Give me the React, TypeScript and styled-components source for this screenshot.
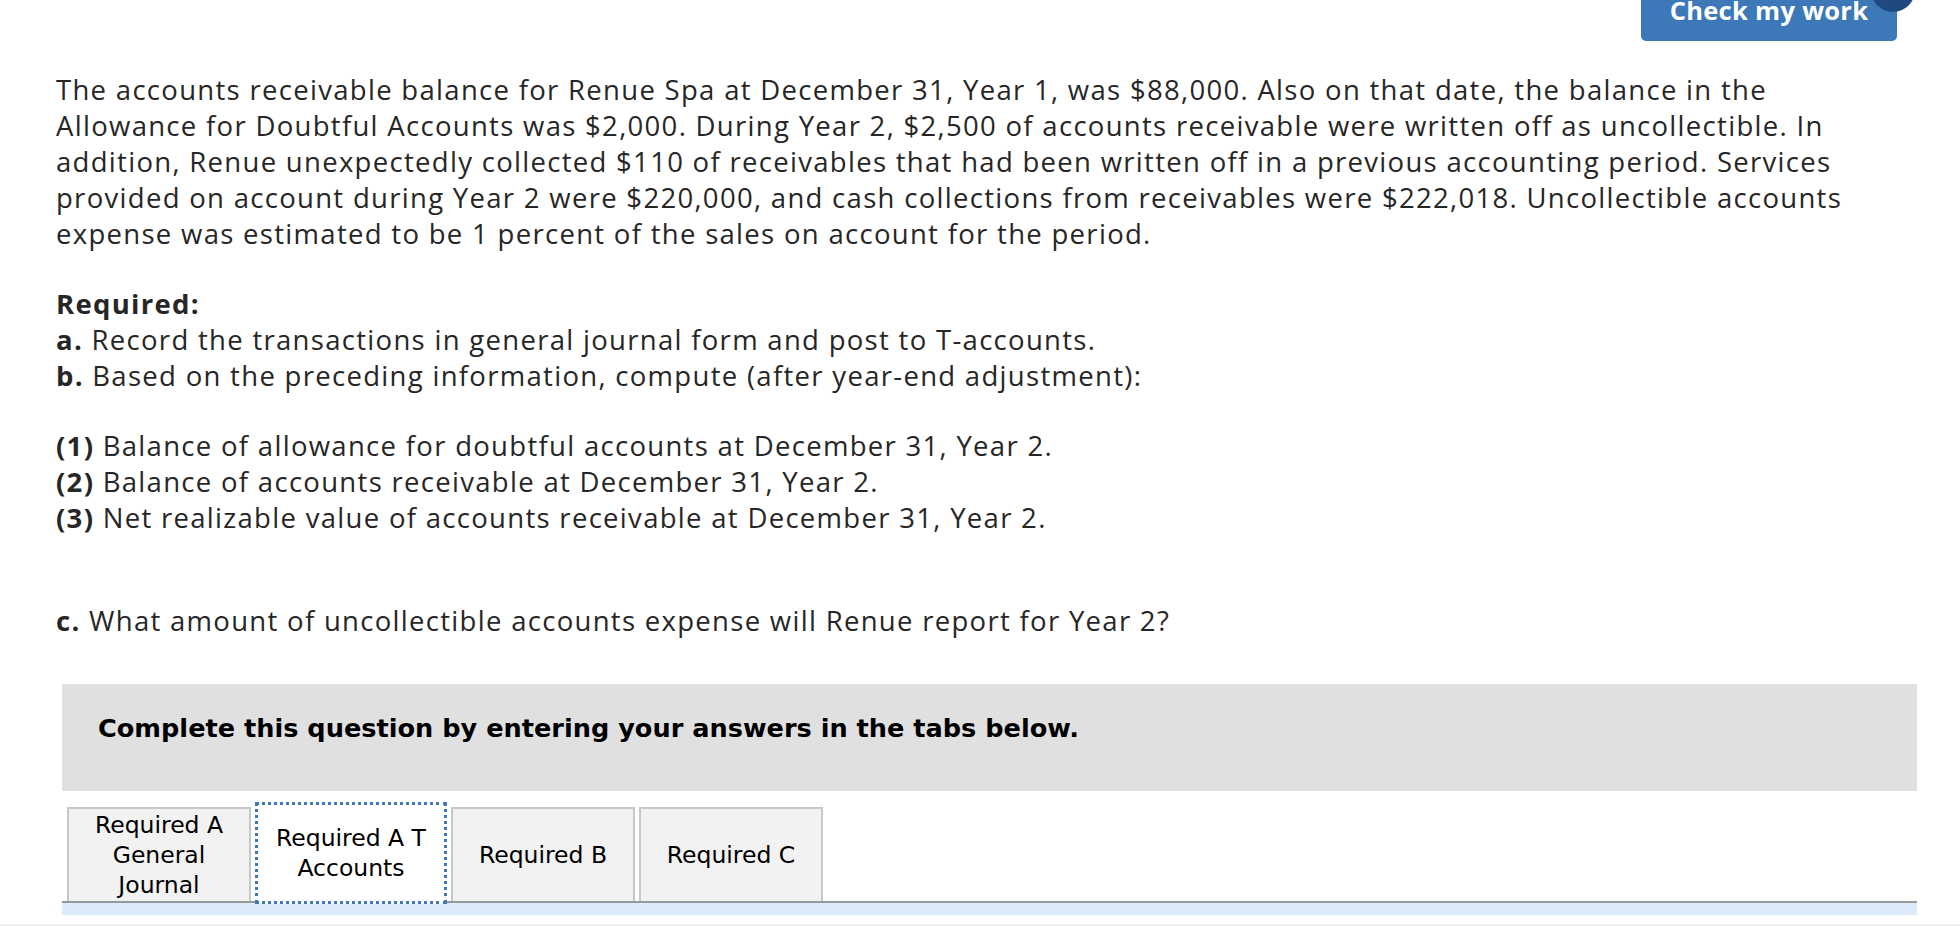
import React from "react";
import styled, { createGlobalStyle } from "styled-components";

const Global = createGlobalStyle`
  html, body { margin: 0; padding: 0; background: #ffffff; }
  body { width: 1960px; height: 926px; overflow: hidden; }
`;

const Page = styled.div`
  width: 1960px;
  height: 926px;
  display: flex;
  flex-direction: column;
  font-family: "Open Sans", "Liberation Sans", sans-serif;
  color: #262626;
  position: relative;
`;

const TopBar = styled.div`
  display: flex;
  justify-content: flex-end;
  padding-right: 63px;
  height: 41px;
  overflow: visible;
`;

const CheckButton = styled.button`
  position: relative;
  margin-top: -12px;
  width: 256px;
  height: 53px;
  border: none;
  border-radius: 5px;
  background: #3d79b8;
  color: #ffffff;
  font-family: "Open Sans", "Liberation Sans", sans-serif;
  font-weight: 700;
  font-size: 25.5px;
  letter-spacing: 0.3px;
  padding: 0;
  padding-top: 9px;
  line-height: 26px;
  display: flex;
  align-items: flex-start;
  justify-content: center;
  overflow: visible;
`;

const Badge = styled.span`
  position: absolute;
  left: 230px;
  top: -20px;
  width: 44px;
  height: 44px;
  border-radius: 50%;
  background: #1e4a80;
`;

const Content = styled.div`
  padding: 31px 43px 0 56px;
  display: flex;
  flex-direction: column;
`;

const Para = styled.div<{ $gap?: number }>`
  font-size: 27.5px;
  letter-spacing: 1.3px;
  line-height: 36px;
  margin-top: ${(p) => p.$gap ?? 0}px;
`;

const Line = styled.span`
  display: block;
  white-space: nowrap;
`;

const B = styled.b`
  font-weight: 700;
`;

const Instruction = styled.div`
  margin: 45px 0 0 6px;
  height: 107px;
  box-sizing: border-box;
  background: #e0e0e0;
  padding: 29px 0 0 36px;
  font-family: "DejaVu Sans", Verdana, sans-serif;
  font-weight: 700;
  font-size: 25.6px;
  line-height: 30px;
  color: #000;
`;

const TabArea = styled.div`
  margin: 2px 0 0 6px;
  display: flex;
  flex-direction: column;
`;

const TabRow = styled.div`
  display: flex;
  align-items: flex-end;
  gap: 4px;
  padding-left: 5px;
  height: 108px;
  border-bottom: 2px solid #999999;
  position: relative;
`;

const Tab = styled.div<{ $active?: boolean }>`
  box-sizing: border-box;
  width: ${(p) => (p.$active ? 192 : 184)}px;
  height: ${(p) => (p.$active ? 102 : 94)}px;
  margin-bottom: ${(p) => (p.$active ? -3 : 0)}px;
  display: flex;
  align-items: center;
  justify-content: center;
  text-align: center;
  font-family: "DejaVu Sans", Verdana, sans-serif;
  font-size: 23.5px;
  line-height: 30px;
  color: #000;
  background: ${(p) => (p.$active ? "#ffffff" : "#f2f2f2")};
  border: ${(p) => (p.$active ? "3px dotted #3d79b8" : "2px solid #c8c8c8")};
  border-bottom: ${(p) => (p.$active ? "3px dotted #3d79b8" : "none")};
  position: relative;
  z-index: ${(p) => (p.$active ? 2 : 1)};
`;

const Band = styled.div`
  height: 12px;
  background: #dbebf9;
`;

const Footer = styled.div`
  margin-top: auto;
  height: 2px;
  background: #efefef;
`;

export default function App() {
  return (
    <>
      <Global />
      <Page>
        <TopBar>
          <CheckButton>
            Check my work
            <Badge />
          </CheckButton>
        </TopBar>
        <Content>
          <Para>
            <Line>
              The accounts receivable balance for Renue Spa at December 31, Year 1, was $88,000. Also on that date, the balance in the
            </Line>
            <Line>
              Allowance for Doubtful Accounts was $2,000. During Year 2, $2,500 of accounts receivable were written off as uncollectible. In
            </Line>
            <Line>
              addition, Renue unexpectedly collected $110 of receivables that had been written off in a previous accounting period. Services
            </Line>
            <Line>
              provided on account during Year 2 were $220,000, and cash collections from receivables were $222,018. Uncollectible accounts
            </Line>
            <Line>expense was estimated to be 1 percent of the sales on account for the period.</Line>
          </Para>
          <Para $gap={34}>
            <Line>
              <B>Required:</B>
            </Line>
            <Line>
              <B>a.</B> Record the transactions in general journal form and post to T-accounts.
            </Line>
            <Line>
              <B>b.</B> Based on the preceding information, compute (after year-end adjustment):
            </Line>
          </Para>
          <Para $gap={34}>
            <Line>
              <B>(1)</B> Balance of allowance for doubtful accounts at December 31, Year 2.
            </Line>
            <Line>
              <B>(2)</B> Balance of accounts receivable at December 31, Year 2.
            </Line>
            <Line>
              <B>(3)</B> Net realizable value of accounts receivable at December 31, Year 2.
            </Line>
          </Para>
          <Para $gap={67}>
            <Line>
              <B>c.</B> What amount of uncollectible accounts expense will Renue report for Year 2?
            </Line>
          </Para>
          <Instruction>Complete this question by entering your answers in the tabs below.</Instruction>
          <TabArea>
            <TabRow>
              <Tab>
                Required A
                <br />
                General
                <br />
                Journal
              </Tab>
              <Tab $active>
                Required A T
                <br />
                Accounts
              </Tab>
              <Tab>Required B</Tab>
              <Tab>Required C</Tab>
            </TabRow>
            <Band />
          </TabArea>
        </Content>
        <Footer />
      </Page>
    </>
  );
}
